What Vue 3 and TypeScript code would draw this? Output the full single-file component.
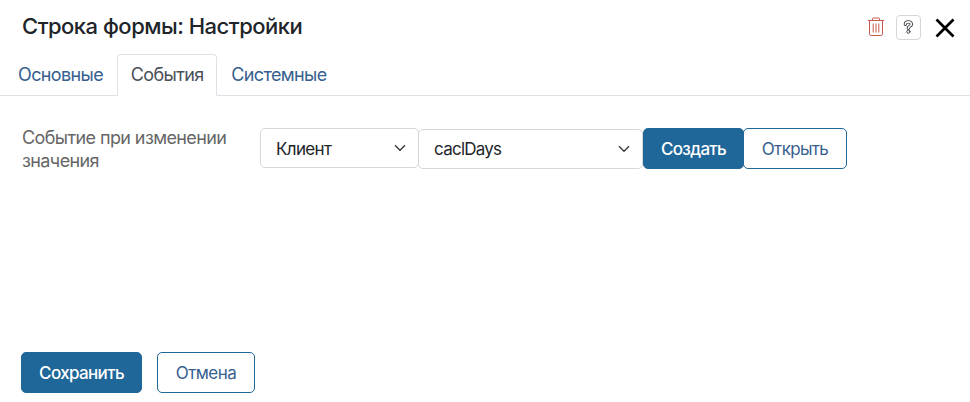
<script setup lang="ts">
import { ref } from 'vue'

const tabs: string[] = ['Основные', 'События', 'Системные']
const activeTab = ref<string>('События')
</script>

<template>
  <div class="dialog">
    <header class="header">
      <h1 class="title">Строка формы: Настройки</h1>
      <div class="tools">
        <button class="tool trash" type="button" aria-label="Удалить">
          <svg width="18" height="20" viewBox="0 0 18 20" fill="none" stroke="currentColor">
            <path d="M1 3.5H17M5.5 3.5V1.8Q5.5 1 6.3 1H11.7Q12.5 1 12.5 1.8V3.5M2.5 3.5V16.8Q2.5 18.5 4.2 18.5H13.8Q15.5 18.5 15.5 16.8V3.5M6.2 6.5V15.5M9 6.5V15.5M11.8 6.5V15.5" />
          </svg>
        </button>
        <button class="tool help" type="button" aria-label="Справка">
          <svg width="11" height="15" viewBox="0 0 11 15" fill="none" stroke-linecap="round">
            <path class="mark-outer" d="M2.4 4.2C2.5 1 8.6 1.2 8.4 4.3C8.3 6.3 5.4 6 5.4 8.2" />
            <path class="mark-inner" d="M2.4 4.2C2.5 1 8.6 1.2 8.4 4.3C8.3 6.3 5.4 6 5.4 8.2" />
            <circle class="mark-dot" cx="5.4" cy="11.7" r="1.6" />
          </svg>
        </button>
        <button class="tool close" type="button" aria-label="Закрыть">
          <svg width="20" height="20" viewBox="0 0 20 20" fill="none" stroke="currentColor" stroke-width="2.7">
            <path d="M1.5 1.5L18.5 18.5M18.5 1.5L1.5 18.5" />
          </svg>
        </button>
      </div>
    </header>

    <nav class="tabs">
      <button
        v-for="tab in tabs"
        :key="tab"
        type="button"
        class="tab"
        :class="{ active: tab === activeTab }"
        @click="activeTab = tab"
      >{{ tab }}</button>
    </nav>

    <main class="body">
      <div class="label">Событие при изменении значения</div>
      <div class="controls">
        <div class="select context">
          <span>Клиент</span>
          <svg class="chevron" width="12" height="8" viewBox="0 0 12 8"><path d="M1 1.2L6 6.2L11 1.2" /></svg>
        </div>
        <div class="select handler">
          <span>caclDays</span>
          <svg class="chevron" width="12" height="8" viewBox="0 0 12 8"><path d="M1 1.2L6 6.2L11 1.2" /></svg>
        </div>
        <button class="btn primary create" type="button">Создать</button>
        <button class="btn outline open" type="button">Открыть</button>
      </div>
    </main>

    <footer class="footer">
      <button class="btn primary save" type="button">Сохранить</button>
      <button class="btn outline cancel" type="button">Отмена</button>
    </footer>
  </div>
</template>

<style>
body {
  margin: 0;
  background: #fff;
}
</style>

<style scoped>
.dialog {
  box-sizing: border-box;
  width: 970px;
  height: 402px;
  display: flex;
  flex-direction: column;
  font-family: Inter, "Liberation Sans", sans-serif;
  font-size: 17px;
  color: #212529;
  overflow: hidden;
}
.dialog * {
  box-sizing: border-box;
}
button {
  font: inherit;
  margin: 0;
  padding: 0;
  background: none;
  border: 0;
  white-space: nowrap;
}
svg {
  display: block;
}
.header {
  height: 54px;
  flex: none;
  display: flex;
  align-items: center;
  justify-content: space-between;
  padding: 0 15.5px 0 22px;
}
.title {
  margin: 0;
  padding-bottom: 2px;
  font-size: 22px;
  font-weight: 500;
  line-height: 26px;
  letter-spacing: -0.5px;
}
.tools {
  display: flex;
  align-items: center;
}
.trash {
  color: #c7594b;
}
.help {
  width: 25px;
  height: 25px;
  margin-left: 11px;
  display: flex;
  align-items: center;
  justify-content: center;
  border: 1px solid #d4d6d8;
  border-radius: 4px;
}
.mark-outer {
  stroke: #3c4043;
  stroke-width: 3.4;
}
.mark-inner {
  stroke: #fff;
  stroke-width: 1.6;
}
.mark-dot {
  stroke: #3c4043;
  stroke-width: 1;
}
.close {
  margin-left: 13.5px;
  padding-top: 2px;
  color: #000;
}
.tabs {
  height: 42px;
  flex: none;
  display: flex;
  padding-left: 4px;
  border-bottom: 1px solid #dee2e6;
}
.tab {
  height: 42px;
  padding: 0 12.7px 2px 13px;
  border: 1px solid transparent;
  border-radius: 4px 4px 0 0;
  font-size: 18px;
  letter-spacing: -0.62px;
  color: #37608f;
}
.tab.active {
  color: #495057;
  background: #fff;
  border-color: #dee2e6 #dee2e6 #fff;
}
.body {
  flex: 1;
  display: flex;
  align-items: flex-start;
  padding: 30px 0 0 22px;
}
.label {
  width: 238px;
  padding-right: 20px;
  font-size: 18px;
  line-height: 23px;
  letter-spacing: -0.6px;
  color: #666;
}
.controls {
  display: flex;
  align-items: flex-start;
  padding-top: 2px;
}
.select {
  height: 40px;
  display: flex;
  align-items: center;
  justify-content: space-between;
  padding: 0 12.5px 0 15px;
  border: 1px solid #d5d7d9;
  border-radius: 5px;
  letter-spacing: -0.65px;
}
.select span {
  padding-top: 2px;
}
.context {
  width: 159px;
}
.handler {
  width: 225px;
  margin: 1px 0 0 -1px;
  letter-spacing: -0.75px;
}
.handler span {
  padding-top: 0;
}
.chevron {
  fill: none;
  stroke: #343a40;
  stroke-width: 1.4;
}
.btn {
  height: 41px;
  border: 1px solid #1f6699;
  border-radius: 5px;
  letter-spacing: -0.65px;
}
.primary {
  background: #1f6699;
  color: #fff;
  font-weight: 500;
}
.outline {
  color: #37608f;
}
.create {
  width: 101px;
  letter-spacing: -0.7px;
}
.open {
  width: 104px;
  margin-left: -1px;
}
.footer {
  height: 50px;
  flex: none;
  display: flex;
  gap: 15px;
  padding-left: 21px;
}
.save {
  width: 121px;
}
.cancel {
  width: 98px;
  letter-spacing: -0.55px;
}
</style>
